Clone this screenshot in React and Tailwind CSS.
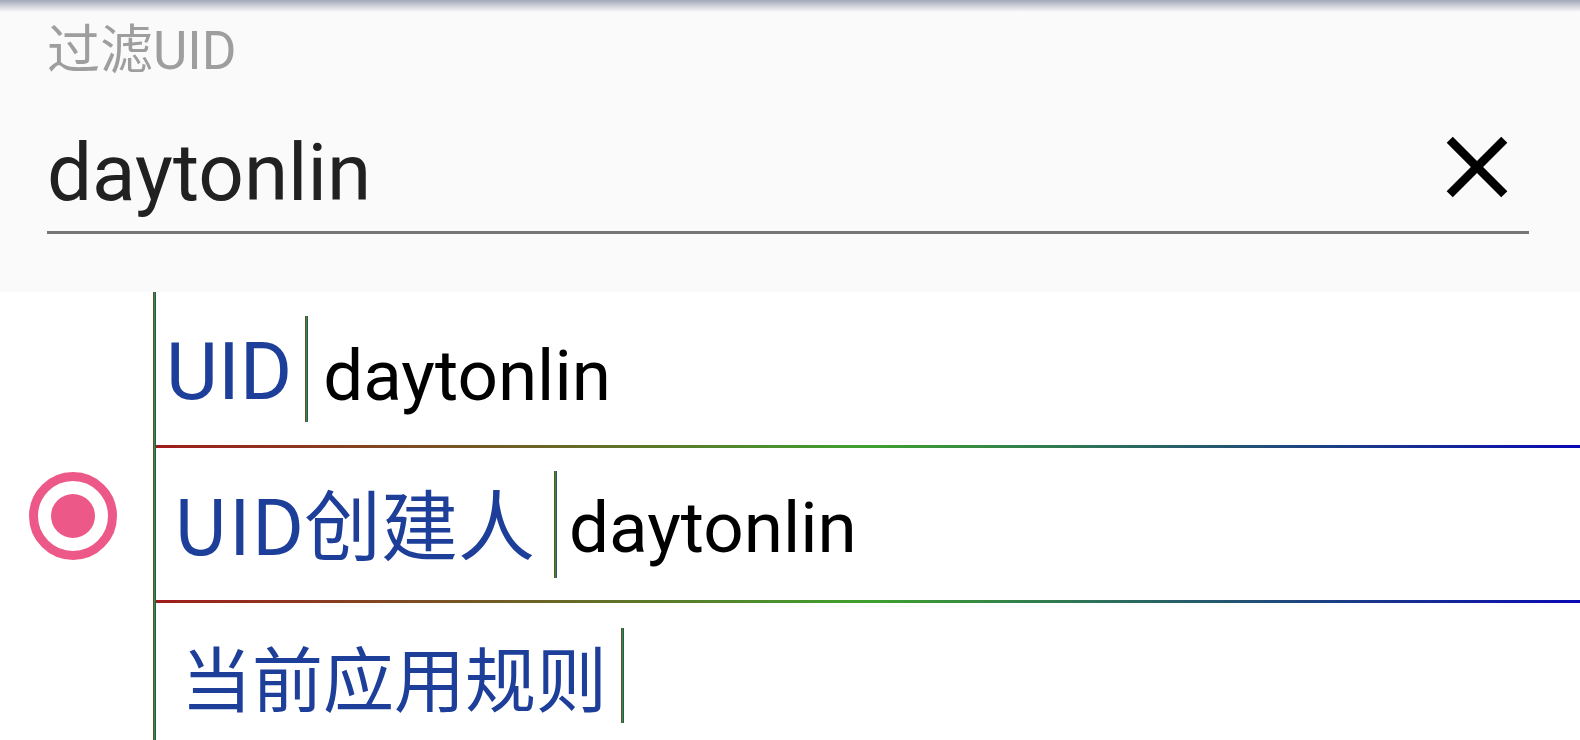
export default function App() {
  return (
    <div className="w-[1580px] h-[740px] overflow-hidden bg-white font-['Roboto','Noto_Sans_CJK_SC',sans-serif]">
      <div className="relative bg-[#fafafa] h-[292px] pl-[47px] pr-[51px] flex flex-col">
        <div className="absolute inset-x-0 top-0 h-[12px] bg-linear-to-b from-[#a3a7b8] to-[#fafafa]/0" />
        <div className="mt-[20px] h-[62px] text-[53px] leading-[62px] text-[#9e9e9e] whitespace-nowrap">过滤UID</div>
        <div className="h-[149px] flex items-start justify-between">
          <span className="mt-[51px] text-[80px] leading-[80px] text-[#212121]">daytonlin</span>
          <svg className="mt-[33px]" width="104" height="104" viewBox="0 0 24 24">
            <path d="M19 6.41L17.59 5 12 10.59 6.41 5 5 6.41 10.59 12 5 17.59 6.41 19 12 13.41 17.59 19 19 17.59 13.41 12z" fill="#000" />
          </svg>
        </div>
        <div className="h-[3px] bg-[#767676]" />
      </div>
      <div className="h-[448px] flex overflow-hidden">
        <div className="w-[153px] shrink-0 flex items-center pl-[29px]">
          <div className="w-[88px] h-[88px] rounded-full border-[9px] border-[#ec5888] flex items-center justify-center">
            <div className="w-[44px] h-[44px] rounded-full bg-[#ec5888]" />
          </div>
        </div>
        <div className="w-[3px] shrink-0 self-stretch bg-linear-to-r/srgb from-[#7a3418] via-[#3c8c2c] to-[#1c3c9c]" />
        <div className="flex-1 flex flex-col">
          <div className="h-[153px] shrink-0 flex items-center pl-[10px] whitespace-nowrap">
            <span className="mt-[7px] text-[80px] leading-[80px] text-[#1d3f9a]">UID</span>
            <div className="ml-[13px] w-[3px] h-[106px] shrink-0 bg-linear-to-r/srgb from-[#7a3418] via-[#3c8c2c] to-[#1c3c9c]" />
            <span className="ml-[15px] mt-[13px] text-[71px] leading-[71px] text-black">daytonlin</span>
          </div>
          <div className="h-[3px] shrink-0 bg-linear-to-r/srgb from-[#a01c1c] via-[#3ea12e] to-[#0a0ab2]" />
          <div className="h-[152px] shrink-0 flex items-center pl-[17px] whitespace-nowrap">
            <span className="mb-[5px] font-['Noto_Sans_CJK_SC',sans-serif] text-[77px] leading-[77px] text-[#1d3f9a]">UID创建人</span>
            <div className="ml-[19px] w-[3px] h-[107px] shrink-0 bg-linear-to-r/srgb from-[#7a3418] via-[#3c8c2c] to-[#1c3c9c]" />
            <span className="ml-[12px] mt-[6px] text-[71px] leading-[71px] text-black">daytonlin</span>
          </div>
          <div className="h-[3px] shrink-0 bg-linear-to-r/srgb from-[#a01c1c] via-[#3ea12e] to-[#0a0ab2]" />
          <div className="h-[144px] shrink-0 flex items-center pl-[25px] whitespace-nowrap">
            <span className="font-['Noto_Sans_CJK_SC',sans-serif] text-[71px] leading-[71px] text-[#1d3f9a]">当前应用规则</span>
            <div className="ml-[14px] w-[3px] h-[95px] shrink-0 bg-linear-to-r/srgb from-[#7a3418] via-[#3c8c2c] to-[#1c3c9c]" />
          </div>
        </div>
      </div>
    </div>
  );
}
